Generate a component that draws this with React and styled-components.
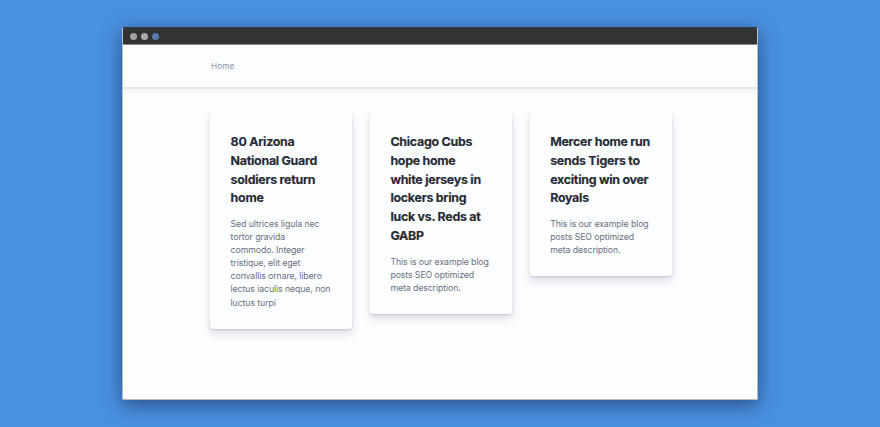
import React from "react";
import styled, { createGlobalStyle } from "styled-components";

const GlobalStyle = createGlobalStyle`
  * { box-sizing: border-box; }
  body {
    margin: 0;
    background: #4a90e2;
    font-family: Inter, "Liberation Sans", sans-serif;
  }
`;

const Stage = styled.main`
  height: 427px;
  padding: 27px 122px;
  overflow: hidden;
  background: #4a90e2;
`;

const BrowserWindow = styled.section`
  width: 636px;
  height: 373px;
  overflow: hidden;
  border: 1px solid #b9bdc4;
  border-top-color: #303947;
  border-radius: 2px;
  background: #fcfdff;
  box-shadow: 0 5px 19px rgba(24, 43, 75, 0.65);
`;

const TitleBar = styled.div`
  display: flex;
  align-items: center;
  gap: 4px;
  height: 17px;
  margin: 0 -1px;
  padding: 1px 8px 0;
  border-bottom: 1px solid #8b8d93;
  background: #323334;
`;

const WindowDot = styled.span`
  width: 7px;
  height: 7px;
  border-radius: 50%;
  background: ${({ $color }) => $color};
`;

const Nav = styled.nav`
  display: flex;
  align-items: center;
  height: 44px;
  padding: 0 0 0 88px;
  border-bottom: 2px solid #e3e7ec;
  box-shadow: 0 2px 5px rgba(80, 95, 115, 0.07);
`;

const NavLink = styled.a`
  color: #8795a9;
  font-size: 8.2px;
  line-height: 12px;
  letter-spacing: 0.15px;
`;

const CardGrid = styled.div`
  display: grid;
  grid-template-columns: repeat(3, 142px);
  align-items: start;
  column-gap: 17.8px;
  padding: 22px 87px 0;
`;

const Card = styled.article`
  padding: 22px 20px 19px 20.6px;
  border-radius: 3px;
  background: #fcfdff;
  box-shadow: 0 5px 9px rgba(70, 85, 110, 0.17),
    0 1px 2px rgba(70, 85, 110, 0.22);
  clip-path: inset(1px -12px -16px -12px);
`;

const CardTitle = styled.h2`
  margin: 0;
  color: #272c33;
  font-size: 12.4px;
  font-weight: 700;
  line-height: 18.75px;
  letter-spacing: -0.26px;
  -webkit-text-stroke: 0.15px #272c33;
  white-space: nowrap;
`;

const CardText = styled.p`
  margin: 10px 0 0;
  color: #68717d;
  font-size: 8.75px;
  line-height: 13.1px;
  letter-spacing: -0.1px;
  white-space: nowrap;
`;

const Line = styled.span`
  display: block;
`;

const dots = ["#a2a2a2", "#aaaaaa", "#597dab"];

const example = ["This is our example blog", "posts SEO optimized", "meta description."];

const posts = [
  {
    title: ["80 Arizona", "National Guard", "soldiers return", "home"],
    text: [
      "Sed ultrices ligula nec",
      "tortor gravida",
      "commodo. Integer",
      "tristique, elit eget",
      "convallis ornare, libero",
      "lectus iaculis neque, non",
      "luctus turpi",
    ],
  },
  {
    title: ["Chicago Cubs", "hope home", "white jerseys in", "lockers bring", "luck vs. Reds at", "GABP"],
    text: example,
  },
  {
    title: ["Mercer home run", "sends Tigers to", "exciting win over", "Royals"],
    text: example,
  },
];

function Lines({ items }) {
  return items.map((line) => <Line key={line}>{line} </Line>);
}

export default function App() {
  return (
    <>
      <GlobalStyle />
      <Stage>
        <BrowserWindow>
          <TitleBar>
            {dots.map((color) => (
              <WindowDot key={color} $color={color} />
            ))}
          </TitleBar>
          <Nav>
            <NavLink>Home</NavLink>
          </Nav>
          <CardGrid>
            {posts.map((post) => (
              <Card key={post.title[0]}>
                <CardTitle>
                  <Lines items={post.title} />
                </CardTitle>
                <CardText>
                  <Lines items={post.text} />
                </CardText>
              </Card>
            ))}
          </CardGrid>
        </BrowserWindow>
      </Stage>
    </>
  );
}
